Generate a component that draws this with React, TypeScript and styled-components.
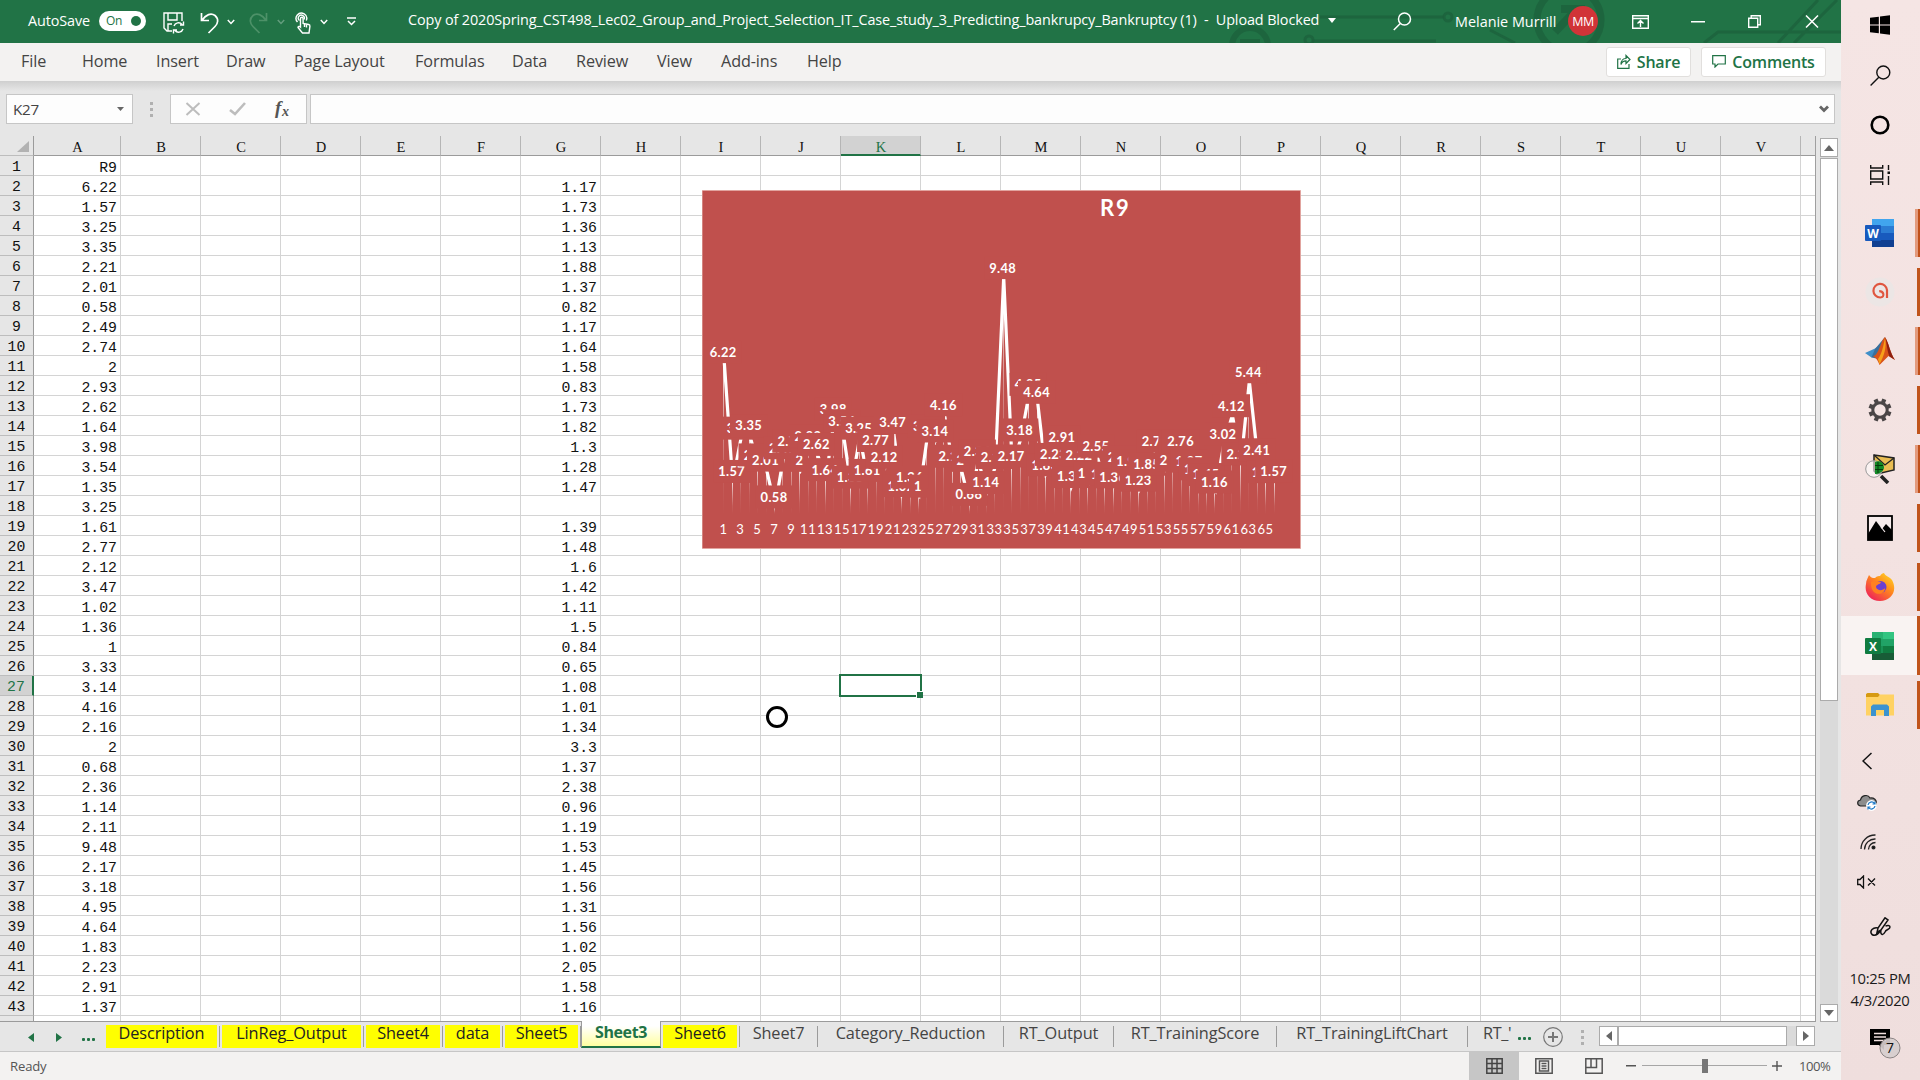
import React from "react";
import styled, { createGlobalStyle, css } from "styled-components";

const UI = `"Open Sans", "Noto Sans", sans-serif`;
const MONO = `"Liberation Mono", "DejaVu Sans Mono", monospace`;
const GREEN = "#217346";

const Global = createGlobalStyle`
  * { box-sizing: border-box; }
  html, body { margin: 0; padding: 0; background: #e6e6e6; overflow: hidden; }
  svg { display: block; flex: none; }
`;

const Screen = styled.div`
  width: 1920px; height: 1080px; display: flex; overflow: hidden;
  font-family: ${UI}; color: #444;
`;
const Win = styled.div`
  width: 1841px; height: 1080px; display: flex; flex-direction: column; background: #e6e6e6;
`;

/* ---------- title bar ---------- */
const TitleBar = styled.header`
  position: relative; height: 43px; flex: none; display: flex; align-items: center;
  background: ${GREEN}; color: #fff; white-space: nowrap; overflow: hidden;
`;
const Pattern = styled.svg`position: absolute; left: 1220px; top: 0;`;
const Slot = styled.div<{ $w: number; $center?: boolean; $y?: number; $pad?: number }>`
  position: relative; width: ${p => p.$w}px; height: 43px; flex: none; display: flex; align-items: center;
  justify-content: ${p => (p.$center ? "center" : "flex-start")};
  padding: ${p => Math.max(0, p.$y || 0)}px 0 ${p => Math.max(0, -(p.$y || 0))}px ${p => p.$pad || 0}px;
`;
const TitleText = styled.span<{ $ls?: number }>`
  font-size: 14.4px; letter-spacing: ${p => p.$ls || 0}px; white-space: pre;
`;
const Toggle = styled.div`
  width: 47px; height: 20px; border-radius: 10px; background: #fff; color: ${GREEN};
  display: flex; align-items: center; justify-content: space-between; padding: 0 5px 0 7px;
  font-size: 12px; letter-spacing: -0.4px;
`;
const Knob = styled.i`width: 10px; height: 10px; border-radius: 50%; background: ${GREEN};`;
const Avatar = styled.div`
  width: 30px; height: 30px; border-radius: 50%; background: #d13438; color: #fff; font-size: 12.5px;
  letter-spacing: -0.5px; display: flex; align-items: center; justify-content: center;
`;

/* ---------- ribbon tabs ---------- */
const Ribbon = styled.nav`
  height: 38px; flex: none; display: flex; align-items: center; background: #f3f2f1; padding-left: 21px;
  font-size: 16.2px; color: #444;
`;
const RibbonTab = styled.span<{ $w: number }>`width: ${p => p.$w}px; white-space: nowrap; letter-spacing: -0.1px; padding-bottom: 2px;`;
const RibbonBtn = styled.button<{ $w: number; $m: number }>`
  width: ${p => p.$w}px; height: 30px; margin: 0 ${p => p.$m}px 0 0; padding: 0 0 1px; border: 1px solid #e1dfdd; border-radius: 3px;
  background: #fff; color: ${GREEN}; font: 600 16px ${UI}; letter-spacing: -0.2px;
  display: flex; align-items: center; justify-content: center; gap: 6px;
`;
const Grow = styled.div`flex: 1;`;

/* ---------- formula bar ---------- */
const FormulaBar = styled.div`
  height: 55px; flex: none; display: flex; align-items: flex-start; padding: 13px 0 0 6px;
  background: linear-gradient(#cfcfcf, #e6e6e6 10px);
`;
const Field = styled.div<{ $w: number; $m?: number; $pad?: string; $end?: boolean }>`
  width: ${p => p.$w}px; height: 30px; margin-right: ${p => p.$m || 0}px; background: #fdfdfd; border: 1px solid #c6c6c6;
  display: flex; align-items: center; justify-content: ${p => (p.$end ? "flex-end" : "space-between")};
  padding: ${p => p.$pad || "0 8px 0 6px"}; font-size: 15.2px; letter-spacing: -0.2px;
`;
const Dots = styled.div<{ $w: number }>`
  width: ${p => p.$w}px; display: flex; flex-direction: column; align-items: center; gap: 3px; align-self: center;
  i { width: 3px; height: 3px; background: #b0b0b0; }
`;
const DotsTop = styled.div`height: 30px; display: flex; align-items: center;`;

/* ---------- sheet ---------- */
const SheetArea = styled.div`height: 886px; flex: none; display: flex;`;
const Grid = styled.div`
  position: relative; width: 1816px; height: 886px; overflow: hidden; border-right: 1px solid #9f9f9f;
  border-bottom: 1px solid #9b9b9b; background: #fff; font-family: ${MONO}; font-size: 14.8px; color: #111;
`;
const HeadRow = styled.div`display: flex; height: 20px; background: #e6e6e6;`;
const Corner = styled.div`
  width: 34px; flex: none; height: 20px; border-right: 1px solid #9b9b9b; border-bottom: 1px solid #bdbdbd; display: flex;
  align-items: flex-end; justify-content: flex-end; padding: 0 4px 3px 0;
`;
const ColHead = styled.div<{ $w: number; $on?: boolean }>`
  width: ${p => p.$w}px; flex: none; height: 20px; display: flex; align-items: center; justify-content: center; padding: 4px 0 0 1px;
  border-right: 1px solid #b5b5b5; border-bottom: 1px solid #9b9b9b; font-family: "Liberation Serif", serif; font-size: 14.5px;
  ${p => p.$on && css`background: #d2d2d2; color: ${GREEN}; border-bottom: 2px solid ${GREEN}; padding-top: 5px;`}
`;
const Row = styled.div`display: flex; height: 20px;`;
const RowHead = styled.div<{ $on?: boolean }>`
  width: 34px; flex: none; height: 20px; display: flex; align-items: center; justify-content: center; padding-top: 3px;
  background: ${p => (p.$on ? "#d2d2d2" : "#e6e6e6")}; color: ${p => (p.$on ? GREEN : "#111")};
  border-right: ${p => (p.$on ? `2px solid ${GREEN}` : "1px solid #9b9b9b")}; border-bottom: 1px solid #bdbdbd;
`;
const Cell = styled.div<{ $w: number }>`
  width: ${p => p.$w}px; flex: none; height: 20px; display: flex; align-items: center; justify-content: flex-end;
  padding: 4px 3px 0 0; border-right: 1px solid #d4d4d4; border-bottom: 1px solid #d4d4d4;
`;
const Selection = styled.div`
  position: absolute; left: 839px; top: 538px; width: 83px; height: 23px; border: 2px solid ${GREEN};
  &::after { content: ""; position: absolute; right: -3px; bottom: -3px; width: 6px; height: 6px; background: ${GREEN}; border: 1px solid #fff; border-right: 0; border-bottom: 0; }
`;
const Busy = styled.div`
  position: absolute; left: 766px; top: 570px; width: 22px; height: 22px; border: 3px solid #000; border-radius: 50%; background: #fff;
`;
const ChartBox = styled.div`position: absolute; left: 702px; top: 54px;`;

const VScroll = styled.div`
  width: 19px; margin-left: 4px; padding-top: 2px; display: flex; flex-direction: column; height: 886px;
`;
const ScrollBtn = styled.div<{ $w?: number; $h?: number }>`
  width: ${p => p.$w || 18}px; height: ${p => p.$h || 18}px; flex: none; border: 1px solid #ababab; background: #fff;
  display: flex; align-items: center; justify-content: center;
`;
const Track = styled.div<{ $h?: boolean }>`
  flex: 1; background: #dadada; display: flex; padding-top: ${p => (p.$h ? 0 : 1)}px; ${p => !p.$h && "width: 18px;"}
`;
const Thumb = styled.div<{ $w: number; $h: number }>`
  width: ${p => p.$w}px; height: ${p => p.$h}px; background: #fff; border: 1px solid #ababab;
`;

/* ---------- sheet tabs ---------- */
const TabBar = styled.div`height: 29px; flex: none; display: flex; align-items: flex-start; background: #e6e6e6;`;
const TabNav = styled.div`width: 104px; height: 29px; display: flex; align-items: center; padding-left: 28px; gap: 22px; padding-top: 2px;`;
const Ellipsis = styled.span<{ $m?: number; $top?: number }>`
  display: flex; gap: 2px; padding-top: ${p => p.$top || 4}px; margin-left: ${p => p.$m || 0}px;
  i { width: 3px; height: 3px; border-radius: 1px; background: ${GREEN}; }
`;
const Tab = styled.div<{ $w: number; $kind: string }>`
  width: ${p => p.$w}px; height: 26px; flex: none; padding: 3px 3px 0 2px; position: relative; white-space: nowrap;
  font-size: 16.3px; letter-spacing: -0.1px; color: ${p => (p.$kind === "yellow" ? "#222" : "#444")};
  span { display: flex; height: 23px; align-items: center; justify-content: center; padding-bottom: 7px;
    background: ${p => (p.$kind === "yellow" ? "#ffff00" : "transparent")}; }
  &::after { content: ""; position: absolute; right: 0; top: 4px; width: 1px; height: 21px; background: #9b9b9b; }
  ${p => p.$kind === "active" && css`
    padding: 0; color: ${GREEN}; font-weight: 700; font-size: 16px; letter-spacing: -0.4px; border-bottom: 2px solid ${GREEN}; background: #fff;
    border-left: 1px solid #9b9b9b; border-right: 1px solid #9b9b9b; margin-top: -1px; height: 27px;
    span { height: 25px; background: linear-gradient(#fff 20%, #ffffa0); padding-bottom: 3px; }
    &::after { display: none; }
  `}
`;
const CutTab = styled.div`width: 47px; height: 26px; padding: 0 0 0 15px; overflow: hidden; white-space: nowrap; font-size: 16.2px; letter-spacing: -0.3px;`;
const HScroll = styled.div`display: flex; width: 216px; height: 20px; margin: 4px 0 0 8px; flex: none;`;
const TabTool = styled.div<{ $w: number }>`width: ${p => p.$w}px; height: 29px; display: flex; align-items: center; justify-content: center; flex: none; padding-top: 1px;`;

/* ---------- status bar ---------- */
const Status = styled.footer`
  height: 29px; flex: none; border-top: 1px solid #c6c6c6; background: #f3f2f1; display: flex; align-items: center;
  font-size: 13.1px; color: #555; padding-left: 10px; letter-spacing: -0.15px;
`;
const ViewBtn = styled.div<{ $on?: boolean; $w: number; $pad?: number }>`
  width: ${p => p.$w}px; height: 28px; display: flex; align-items: center; justify-content: center; flex: none;
  padding-left: ${p => p.$pad || 0}px; background: ${p => (p.$on ? "#c6c6c6" : "transparent")};
`;
const ZoomRail = styled.div`
  width: 125px; height: 14px; margin: 0 4px; display: flex; justify-content: center; align-items: center;
  background: linear-gradient(#a6a6a6, #a6a6a6) 0 6px / 125px 1px no-repeat;
  i { width: 6px; height: 14px; background: #777; }
`;
const ZoomText = styled.span`width: 58px; padding-left: 16px; letter-spacing: -0.5px;`;

/* ---------- taskbar ---------- */
const Taskbar = styled.aside`
  width: 79px; height: 1080px; display: flex; flex-direction: column; background: linear-gradient(#f5e5e4, #f3e2e1 50%, #efdedd);
`;
const Item = styled.div<{ $h: number; $x?: number }>`
  position: relative; height: ${p => p.$h}px; width: 79px; flex: none; display: flex; align-items: center;
  justify-content: center; padding-right: ${p => Math.max(0, 1 + (p.$x || 0))}px; padding-left: ${p => Math.max(0, -(p.$x || 0))}px;
`;
const Apps = styled.div`margin-top: 3px; display: flex; flex-direction: column;`;
const AppItem = styled(Item)<{ $mark: string }>`
  background: ${p => (p.$mark === "active" ? "#f9f3f2" : "transparent")};
  &::after {
    content: ""; position: absolute; right: 0; top: ${p => (p.$mark === "active" ? 0 : 6)}px; bottom: ${p => (p.$mark === "active" ? 0 : 5)}px;
    width: ${p => (p.$mark === "none" ? 0 : p.$mark === "stack" ? 5 : 3)}px;
    background: ${p => (p.$mark === "stack" ? "linear-gradient(90deg, #e39a7c 60%, #c0501a 60%)" : "#c0541b")};
  }
`;
const Clock = styled.div`
  height: 62px; width: 79px; font-size: 14.8px; line-height: 22px; color: #1b1b1b; text-align: center; padding: 11px 1px 0 0; letter-spacing: -0.35px; white-space: nowrap;
`;
const Divider = styled.div`height: 1px; margin-top: auto; margin-bottom: 5px; background: #c9b3b3;`;

const colA = "R9 6.22 1.57 3.25 3.35 2.21 2.01 0.58 2.49 2.74 2 2.93 2.62 1.64 3.98 3.54 1.35 3.25 1.61 2.77 2.12 3.47 1.02 1.36 1 3.33 3.14 4.16 2.16 2 0.68 2.36 1.14 2.11 9.48 2.17 3.18 4.95 4.64 1.83 2.23 2.91 1.37".split(" ");
const colG = "- 1.17 1.73 1.36 1.13 1.88 1.37 0.82 1.17 1.64 1.58 0.83 1.73 1.82 1.3 1.28 1.47 - 1.39 1.48 1.6 1.42 1.11 1.5 0.84 0.65 1.08 1.01 1.34 3.3 1.37 2.38 0.96 1.19 1.53 1.45 1.56 1.31 1.56 1.02 2.05 1.58 1.16".split(" ").map(v => (v === "-" ? "" : v));
const series = [...colA.slice(1), ..."2.22 1.5 2.55 1.46 1.36 2.12 1.98 1.23 1.85 2.75 2 2.7 2.76 1.97 1.67 1.45 1.16 3.02 4.12 2.25 5.44 2.41 1.56 1.57".split(" ")];
const columns = "ABCDEFGHIJKLMNOPQRSTUV".split("");
const widthOf = (i: number) => (i === 0 ? 87 : 80);

function Chart() {
  const x = (i: number) => 21.2 + i * 8.47;
  const mid = (v: number) => 322 - v * 25.77;
  const y = (v: number) => mid(v) + 9.4;
  const pts = series.map((v, i) => `${x(i) + 1},${y(+v)}`).join(" ");
  return (
    <ChartBox>
      <svg width="599" height="359" viewBox="0 0 599 359" fontFamily="Lato, Carlito, sans-serif" fill="#fff" textAnchor="middle">
        <defs>
          <linearGradient id="drop" x1="0" y1="0" x2="0" y2="1">
            <stop offset="0" stopColor="#fff" stopOpacity="0.85" />
            <stop offset="0.3" stopColor="#fff" stopOpacity="0.5" />
            <stop offset="0.75" stopColor="#fff" stopOpacity="0.08" />
            <stop offset="1" stopColor="#fff" stopOpacity="0" />
          </linearGradient>
        </defs>
        <rect width="599" height="359" fill="#e9b9b5" />
        <rect x="0.5" y="0.8" width="597.7" height="357.4" fill="#c0504d" />
        <text x="413.200" y="25.500" fontSize="22" fontWeight="700" letterSpacing="1.800">R9</text>
        {series.map((v, i) => (
          <rect key={i} x={Math.round(x(i))} y={y(+v)} width="1" height={Math.max(0, 324 - y(+v))} fill="url(#drop)" />
        ))}
        <polyline points={pts} fill="none" stroke="#fff" strokeWidth="3.200" strokeLinejoin="miter" />
        {series.map((v, i) => {
          const w = v.length === 4 ? 37.2 : v.length === 3 ? 27.5 : 18;
          const cy = mid(+v);
          return (
            <g key={i}>
              <rect x={x(i) - w / 2} y={cy - 11.6} width={w} height="23" fill="#c0504d" />
              <text x={x(i)} y={cy + 4.800} fontSize="12.900" fontWeight="700" letterSpacing="0.350">{v}</text>
            </g>
          );
        })}
        {series.map((_, i) => i % 2 === 0 && (
          <text key={i} x={x(i) + 0.3} y="344.200" fontSize="13" letterSpacing="0.600">{i + 1}</text>
        ))}
      </svg>
    </ChartBox>
  );
}

const Chevron = ({ o = 1 }: { o?: number }) => (
  <svg width="8" height="6" viewBox="0 0 8 6" fill="none" stroke="#fff" strokeOpacity={o} strokeWidth="1.5"><path d="M.8 1 4 4.4 7.2 1" /></svg>
);
const Tri = ({ d, c = "#666", w = 10, h = 6 }: { d: string; c?: string; w?: number; h?: number }) => (
  <svg width={w} height={h} viewBox="0 0 10 10" preserveAspectRatio="none" fill={c}><path d={d} /></svg>
);
const DOWN = "M0 0H10L5 10Z", UP = "M0 10H10L5 0Z", LEFT = "M10 0V10L0 5Z", RIGHT = "M0 0V10L10 5Z";

function Title() {
  return (
    <TitleBar>
      <Pattern width="621" height="43" viewBox="0 0 621 43" fill="none" stroke="#1c603c" strokeWidth="3" strokeOpacity=".75">
        <circle cx="30" cy="46" r="18" strokeWidth="6" /><path d="M20 43h20" strokeWidth="8" />
        <circle cx="228" cy="17" r="4" /><path d="M100 17H224M92 41H216" /><circle cx="89" cy="40" r="4" />
        <circle cx="349" cy="20" r="32" strokeWidth="7" /><path d="M335 32 355 11M341 9h20v20" strokeWidth="8" />
        <path d="M270 30 295 43M484 43 498 32H621M558 43 598 0M574 43 617 0" />
      </Pattern>
      <Slot $w={99} $y={-2} $pad={28}><TitleText $ls={-0.1}>AutoSave</TitleText></Slot>
      <Slot $w={57} $y={-2}><Toggle>On<Knob /></Toggle></Slot>
      <Slot $w={36} $y={2} $center>
        <svg width="22" height="22" viewBox="0 0 22 22" fill="none" stroke="#fff" strokeWidth="1.4">
          <path d="M9 19H4L1 16V1H19V9M5 1V8H14V1M5 19V12H9" />
          <path d="M11 14a4.6 4.6 0 0 1 8-1.5M20.5 9.5V13H17M20 17a4.6 4.6 0 0 1-8 1.5M10.500 21.500V18H14" />
        </svg>
      </Slot>
      <Slot $w={35} $y={2} $pad={8}>
        <svg width="20" height="22" viewBox="0 0 20 22" fill="none" stroke="#fff" strokeWidth="1.7"><path d="M1.500 1V8.500H9M2 8.200C6 2.500 11 .5 15 3.500C19 7 18 11.500 15 14.500L8.500 21" /></svg>
      </Slot>
      <Slot $w={21}><Chevron /></Slot>
      <Slot $w={29} $y={2}>
        <svg width="20" height="22" viewBox="0 0 20 22" fill="none" stroke="#4d9168" strokeWidth="1.7"><path d="M18.500 1V8.500H11M18 8.200C14 2.500 9 .5 5 3.500C1 7 2 11.500 5 14.500L11.500 21" /></svg>
      </Slot>
      <Slot $w={18}><Chevron o={0.3} /></Slot>
      <Slot $w={25} $y={2}>
        <svg width="17" height="22" viewBox="0 0 17 22" fill="none" stroke="#fff" strokeWidth="1.400">
          <path d="M2.500 10A5.300 5.300 0 1 1 11.300 8.500M4.500 8.500A3 3 0 1 1 9 7.500" />
          <path d="M5.500 15V6.500a1.300 1.300 0 0 1 2.600 0V11.500l5.500 1c1 .2 1.400.8 1.300 1.800L14 21H7.500L3 15.500c0-1 1.500-1.500 2.500-.5Z" /><path d="M9.500 12v3M11.500 12.500v3" />
        </svg>
      </Slot>
      <Slot $w={27}><Chevron /></Slot>
      <Slot $w={61}>
        <svg width="9" height="9" viewBox="0 0 9 9" fill="none" stroke="#fff" strokeWidth="1.500"><path d="M0 1H9M1 4 4.500 7.500 8 4" /></svg>
      </Slot>
      <Slot $w={917} $y={-4}><TitleText $ls={-0.11}>Copy of 2020Spring_CST498_Lec02_Group_and_Project_Selection_IT_Case_study_3_Predicting_bankrupcy_Bankruptcy (1)  -  Upload Blocked</TitleText></Slot>
      <Slot $w={68} $y={-2} $pad={3}><Tri d={DOWN} c="#fff" w={8} h={5} /></Slot>
      <Slot $w={62} $y={-1}>
        <svg width="19" height="19" viewBox="0 0 19 19" fill="none" stroke="#fff" strokeWidth="1.500"><circle cx="11.500" cy="7" r="6" /><path d="M7.300 11.500.8 18" /></svg>
      </Slot>
      <Slot $w={113}><TitleText>Melanie Murrill</TitleText></Slot>
      <Slot $w={64} $y={-1}><Avatar>MM</Avatar></Slot>
      <Slot $w={59}>
        <svg width="17" height="14" viewBox="0 0 17 14" fill="none" stroke="#fff" strokeWidth="1.400"><path d="M.7.7H16.300V13.300H.7ZM.7 3.500H16.300M8.500 12V6M5.500 8.500l3-3 3 3" /></svg>
      </Slot>
      <Slot $w={57}><svg width="14" height="2"><rect width="14" height="1.500" fill="#fff" /></svg></Slot>
      <Slot $w={57}>
        <svg width="13" height="13" viewBox="0 0 13 13" fill="none" stroke="#fff" strokeWidth="1.400"><path d="M.7 3.200H9.700V12.300H.7ZM3.200 3V.7H12.300V9.800H10" /></svg>
      </Slot>
      <Slot $w={30}><svg width="14" height="13" viewBox="0 0 14 13" stroke="#fff" strokeWidth="1.500"><path d="M1 .5 13 12.500M13 .5 1 12.500" /></svg></Slot>
    </TitleBar>
  );
}

const ribbonTabs: [string, number][] = [["File", 61], ["Home", 74], ["Insert", 70], ["Draw", 68], ["Page Layout", 121], ["Formulas", 97], ["Data", 64], ["Review", 81], ["View", 64], ["Add-ins", 86], ["Help", 60]];
const sheetTabs: [string, number, string][] = [
  ["Description", 116, "yellow"], ["LinReg_Output", 144, "yellow"], ["Sheet4", 79, "yellow"], ["data", 60, "yellow"], ["Sheet5", 78, "yellow"],
  ["Sheet3", 80, "active"], ["Sheet6", 79, "yellow"], ["Sheet7", 78, ""], ["Category_Reduction", 186, ""], ["RT_Output", 110, ""], ["RT_TrainingScore", 163, ""], ["RT_TrainingLiftChart", 191, ""],
];

function OfficeIcon({ letter, shades, tile }: { letter: string; shades: string[]; tile: string }) {
  return (
    <svg width="30" height="28" viewBox="0 0 30 28">
      {shades.map((c, i) => <rect key={i} x="7" y={i * 7} width="22" height="7" fill={c} />)}
      {letter === "X" && <path d="M7 0h11v21H7Z" fill="#21a366" opacity=".55" />}
      <rect y="6" width="16" height="16" rx="1" fill={tile} />
      <text x="8" y="18.500" textAnchor="middle" fontSize="12" fontWeight="700" fill="#fff" fontFamily="Open Sans">{letter}</text>
    </svg>
  );
}

function Tasks() {
  return (
    <Taskbar>
      <Item $h={50}>
        <svg width="20" height="20" viewBox="0 0 17 20" preserveAspectRatio="none" fill="#000"><path d="M0 2.800 7.500 1.700V9.500H0ZM8.500 1.500 17 .2V9.500H8.500ZM0 10.500H7.500V18.300L0 17.200ZM8.500 10.500H17V19.800L8.500 18.500Z" /></svg>
      </Item>
      <Item $h={50}><svg width="21" height="21" viewBox="0 0 21 21" fill="none" stroke="#111" strokeWidth="1.400"><circle cx="13.300" cy="7.500" r="6.500" /><path d="M8.800 12.300.6 20.400" /></svg></Item>
      <Item $h={50}><svg width="20" height="20" viewBox="0 0 20 20" fill="none" stroke="#000" strokeWidth="2.600"><circle cx="10" cy="10" r="8.300" /></svg></Item>
      <Item $h={50}><svg width="20" height="20" viewBox="0 0 20 20" fill="none" stroke="#111" strokeWidth="1.400"><path d="M.7 0V3H12.700V0M.7 6H12.700V14H.7ZM.7 20V17H12.700V20M18.500 0V5M18.500 11V20" /><rect x="17.500" y="6.500" width="2.500" height="2.500" fill="#111" stroke="none" /></svg></Item>
      <Apps>
      <AppItem $h={59} $mark="stack"><OfficeIcon letter="W" shades={["#41a5ee", "#2b7cd3", "#185abd", "#103f91"]} tile="#185abd" /></AppItem>
      <AppItem $h={59} $mark="one">
        <svg width="30" height="30" viewBox="0 0 30 30"><circle cx="15" cy="15" r="14.500" fill="#ece6e5" /><path d="M22 21V13a6.800 6.800 0 1 0-6.800 7.500c2.500 0 3.800-1.500 3-4-.7-1.800-2.400-2.300-4-2.300" fill="none" stroke="#e0563f" strokeWidth="2.200" /></svg>
      </AppItem>
      <AppItem $h={59} $mark="stack">
        <svg width="30" height="28" viewBox="0 0 30 28"><path d="M0 16 10 11.500 14.500 8 10 19 6.500 20.500Z" fill="#3f8fc8" /><path d="M10 12 20 0 14 22 6.500 20.500Z" fill="#3a6f9c" /><path d="M20 0C24 6 25 16 30 23L23.500 19 14.500 28C13 23 10 20 8 19.500 14 18 16 3 20 0Z" fill="#d95319" /><path d="M20 1C22 9 19 20 14.500 27L13 22C17 17 18.500 8 20 1Z" fill="#f6a01a" /><path d="M20 0C24 6 25 16 30 23L24.500 19.500C22 14 22 6 20 0Z" fill="#8e1f10" /></svg>
      </AppItem>
      <AppItem $h={59} $mark="one">
        <svg width="24" height="24" viewBox="-12 -12 24 24" fill="none" stroke="#4a4546"><circle r="7.200" strokeWidth="3" />{[22, 67, 112, 157, 202, 247, 292, 337].map(a => <path key={a} d="M0-8V-11.500" strokeWidth="4.200" transform={`rotate(${a})`} />)}</svg>
      </AppItem>
      <AppItem $h={59} $mark="stack">
        <svg width="30" height="30" viewBox="0 0 30 30"><path d="M9 1 29 4V16L12 20 9 17Z" fill="#e9bd53" stroke="#222" strokeWidth="1.500" /><path d="M9 1 20 11 29 4" fill="none" stroke="#222" strokeWidth="1.300" /><circle cx="9" cy="15" r="8.300" fill="#fff" fillOpacity=".55" stroke="#9a9a9a" /><path d="M10 8C15 6 19 9 19 14 18 18 14 20 10 20Z" fill="#128a26" /><path d="M13 8V19M10 11.500H18M10 15.500H18" stroke="#033a0a" /><path d="M16 22 23 29" stroke="#222" strokeWidth="3.500" /></svg>
      </AppItem>
      <AppItem $h={59} $mark="one">
        <svg width="26" height="26" viewBox="0 0 26 26"><rect x="1" y="1" width="24" height="24" fill="#f6ecec" stroke="#000" strokeWidth="1.800" /><path d="M1 19 9 6 15 14 19 9 25 15V25H1Z" fill="#000" /><path d="m14 12 4 5" stroke="#f6ecec" strokeWidth="1.200" /></svg>
      </AppItem>
      <AppItem $h={59} $mark="one">
        <svg width="30" height="30" viewBox="0 0 30 30">
          <defs><linearGradient id="ff" x1="1" y1="0" x2=".2" y2="1"><stop stopColor="#ffe226" /><stop offset=".45" stopColor="#ff8a1c" /><stop offset="1" stopColor="#ee1d5c" /></linearGradient></defs>
          <path d="M4 3C6 6 8 6 10 6 12 4 14 4 15 4 16 2 18 1 19 1 20 4 25 5 27 8 33 19 26 29 15 29 5 29-1 21 1 12 1 8 3 6 4 3Z" fill="url(#ff)" /><circle cx="15.500" cy="15" r="6" fill="#6a3fd0" /><path d="M6 10C10 8 13 10 16 10 15 13 11 12 11 15 12 19 18 19 20 16 20 22 12 24 8 19 6 16 6 13 6 10Z" fill="#ff8020" />
        </svg>
      </AppItem>
      <AppItem $h={59} $mark="active"><OfficeIcon letter="X" shades={["#33c481", "#21a366", "#107c41", "#185c37"]} tile="#107c41" /></AppItem>
      <AppItem $h={59} $mark="one">
        <svg width="28" height="24" viewBox="0 0 28 24"><path d="M0 1 1.500 0H12L14 2V6H0Z" fill="#d69a12" /><path d="M0 4H12L14 1.500H28V22.500H0Z" fill="#ffd263" /><path d="M5 23V13.500L7 11.500H21L23 13.500V23H18V17H10V23Z" fill="#3b93d0" /></svg>
      </AppItem>
      </Apps>
      <Item $h={53} $x={26}><svg width="10" height="18" viewBox="0 0 10 18" fill="none" stroke="#111" strokeWidth="1.500"><path d="M9.500 1 1 9 9.500 17" /></svg></Item>
      <Item $h={30} $x={26}>
        <svg width="20" height="17" viewBox="0 0 20 17"><path d="M3.500 12C-.5 11 0 6.500 3.500 6 4.500 1 11 0 13 4 17 3.500 20 6 19 9V12Z" fill="#8d8d8d" stroke="#222" strokeWidth="1.200" /><circle cx="14.500" cy="11.500" r="5.400" fill="#fff" /><path d="M11 11a3.600 3.600 0 0 1 6.500-1.500M18 12a3.600 3.600 0 0 1-6.500 1.500M18 7.500V10H15.500M11 15.500V13H13.500" stroke="#1976c5" fill="none" strokeWidth="1.200" /></svg>
      </Item>
      <Item $h={50} $x={24}><svg width="17" height="16" viewBox="0 0 17 16" fill="none" stroke="#222" strokeWidth="1.300"><path d="M1 15A14 14 0 0 1 15.500 1M4.500 15.500A10.500 10.500 0 0 1 15.500 5M8.500 15.500A7 7 0 0 1 15.500 8.500" /><circle cx="13.500" cy="13.500" r="1.400" fill="#111" /></svg></Item>
      <Item $h={30} $x={27}><svg width="19" height="14" viewBox="0 0 19 14" fill="none" stroke="#111" strokeWidth="1.300"><path d="M.7 4.500H3L6.500 1V13L3 9.500H.7ZM11 3.500 18 10.500M18 3.500 11 10.500" /></svg></Item>
      <Item $h={59}><svg width="21" height="20" viewBox="0 0 21 20" fill="none" stroke="#111" strokeWidth="1.500"><path d="M7 15.500 8 11 15 .8 18 3 11 13ZM8 11C3 10-1 14 2 17.500 6 20 9 16 11 13 10 18 13 19 15 15 16 12 20 13 20 10 20 8 17 8.500 15.500 9" /></svg></Item>
      <Clock>10:25 PM<br />4/3/2020</Clock>
      <Item $h={66} $x={-10}>
        <svg width="32" height="32" viewBox="0 0 32 32"><path d="M0 1H20V17H14V22L9 17H0Z" fill="#000" /><path d="M4 5.500H16M4 9H16M4 12.500H16" stroke="#f0dfde" strokeWidth="1.300" /><circle cx="20" cy="20" r="10" fill="#d6cdcd" fillOpacity=".92" stroke="#8b8484" /><text x="20" y="25" textAnchor="middle" fontFamily="Open Sans" fontSize="14" fill="#111">7</text></svg>
      </Item>
      <Divider />
    </Taskbar>
  );
}

export default function App() {
  return (
    <Screen>
      <Global />
      <Win>
        <Title />
        <Ribbon>
          {ribbonTabs.map(([t, w]) => <RibbonTab key={t} $w={w}>{t}</RibbonTab>)}
          <Grow />
          <RibbonBtn $w={85} $m={10}>
            <svg width="14" height="15" viewBox="0 0 14 15" fill="none" stroke={GREEN} strokeWidth="1.200"><path d="M4 5H.7V14.300H12V10M4 10.500C4 6 6.500 4.500 9 4.500V1.500L13 5.500 9 9.500V6.800C7 6.800 5 7.500 4 10.500Z" /></svg>Share
          </RibbonBtn>
          <RibbonBtn $w={125} $m={15}>
            <svg width="14" height="13" viewBox="0 0 14 13" fill="none" stroke={GREEN} strokeWidth="1.200"><path d="M.7.7H13.300V9H6L3 12V9H.7Z" /></svg>Comments
          </RibbonBtn>
        </Ribbon>
        <FormulaBar>
          <Field $w={127}>K27<Tri d={DOWN} w={7} h={4} /></Field>
          <DotsTop><Dots $w={37}><i /><i /><i /></Dots></DotsTop>
          <Field $w={137} $m={3} $pad="0 15px 0 14px">
            <svg width="16" height="14" viewBox="0 0 16 14" stroke="#bdbdbd" strokeWidth="2"><path d="M1.500 1 14.500 13M14.500 1 1.500 13" /></svg>
            <svg width="17" height="14" viewBox="0 0 17 14" fill="none" stroke="#bdbdbd" strokeWidth="2.600"><path d="M1 8 6 12 16 1" /></svg>
            <svg width="18" height="24" viewBox="0 0 18 24" fill="#555" fontFamily="Liberation Serif" fontStyle="italic" fontWeight="700"><text x="2" y="17" fontSize="19">f</text><text x="9" y="19" fontSize="14">x</text></svg>
          </Field>
          <Field $w={1525} $end $pad="0 5px 0 0">
            <svg width="10" height="8" viewBox="0 0 10 8" fill="none" stroke="#666" strokeWidth="2.800"><path d="M1 1.500 5 5.500 9 1.500" /></svg>
          </Field>
        </FormulaBar>
        <SheetArea>
          <Grid>
            <HeadRow>
              <Corner><Tri d="M10 0V10H0Z" c="#b2b2b2" w={12} h={11} /></Corner>
              {columns.map((c, i) => <ColHead key={c} $w={widthOf(i)} $on={c === "K"}>{c}</ColHead>)}
              <ColHead $w={16} />
            </HeadRow>
            {Array.from({ length: 44 }, (_, r) => (
              <Row key={r}>
                <RowHead $on={r === 26}>{r < 43 ? r + 1 : ""}</RowHead>
                {columns.map((c, i) => <Cell key={c} $w={widthOf(i)}>{i === 0 ? colA[r] : i === 6 ? colG[r] : null}</Cell>)}
                <Cell $w={16} />
              </Row>
            ))}
            <Selection />
            <Chart />
            <Busy />
          </Grid>
          <VScroll>
            <ScrollBtn $h={19}><Tri d={UP} /></ScrollBtn>
            <Track><Thumb $w={18} $h={543} /></Track>
            <ScrollBtn><Tri d={DOWN} /></ScrollBtn>
          </VScroll>
        </SheetArea>
        <TabBar>
          <TabNav>
            <Tri d={LEFT} c={GREEN} w={6} h={9} /><Tri d={RIGHT} c={GREEN} w={6} h={9} />
            <Ellipsis $m={-2}><i /><i /><i /></Ellipsis>
          </TabNav>
          {sheetTabs.map(([t, w, k]) => <Tab key={t} $w={w} $kind={k}><span>{t}</span></Tab>)}
          <CutTab>RT_'</CutTab>
          <Ellipsis $m={3} $top={15}><i /><i /><i /></Ellipsis>
          <TabTool $w={43}>
            <svg width="20" height="20" viewBox="0 0 20 20" fill="none" stroke="#777"><circle cx="10" cy="10" r="9.300" strokeWidth="1.200" /><path d="M10 5V15M5 10H15" strokeWidth="2" /></svg>
          </TabTool>
          <TabTool $w={17}><Dots $w={10}><i /><i /><i /></Dots></TabTool>
          <HScroll>
            <ScrollBtn $w={19} $h={20}><Tri d={LEFT} w={6} h={10} /></ScrollBtn>
            <Track $h><Thumb $w={169} $h={20} /></Track>
            <ScrollBtn $w={19} $h={20}><Tri d={RIGHT} w={6} h={10} /></ScrollBtn>
          </HScroll>
        </TabBar>
        <Status>
          Ready
          <Grow />
          <ViewBtn $on $w={50}><svg width="17" height="16" viewBox="0 0 17 16" fill="none" stroke="#444" strokeWidth="1.500"><path d="M.8.8H16.200V15.200H.8ZM.8 5.500H16.200M.8 10.500H16.200M6 .8V15M11 .8V15" /></svg></ViewBtn>
          <ViewBtn $w={50}><svg width="18" height="16" viewBox="0 0 18 16" fill="none" stroke="#555" strokeWidth="1.500"><path d="M.8.8H17.200V15.200H.8ZM4.500 3H13.500V13H4.500ZM6.500 5.500H11.500M6.500 8H11.500M6.500 10.500H11.500" /></svg></ViewBtn>
          <ViewBtn $w={50}><svg width="18" height="16" viewBox="0 0 18 16" fill="none" stroke="#555" strokeWidth="1.500"><path d="M.8.8H17.200V15.200H.8ZM.8 9.500H11.500V.8M6 .8V9.500" /></svg></ViewBtn>
          <ViewBtn $w={19} $pad={5}><svg width="10" height="2"><rect width="10" height="1.500" fill="#555" /></svg></ViewBtn>
          <ZoomRail><i /></ZoomRail>
          <ViewBtn $w={12}><svg width="10" height="10" stroke="#555" strokeWidth="1.400"><path d="M5 0V10M0 5H10" /></svg></ViewBtn>
          <ZoomText>100%</ZoomText>
        </Status>
      </Win>
      <Tasks />
    </Screen>
  );
}
